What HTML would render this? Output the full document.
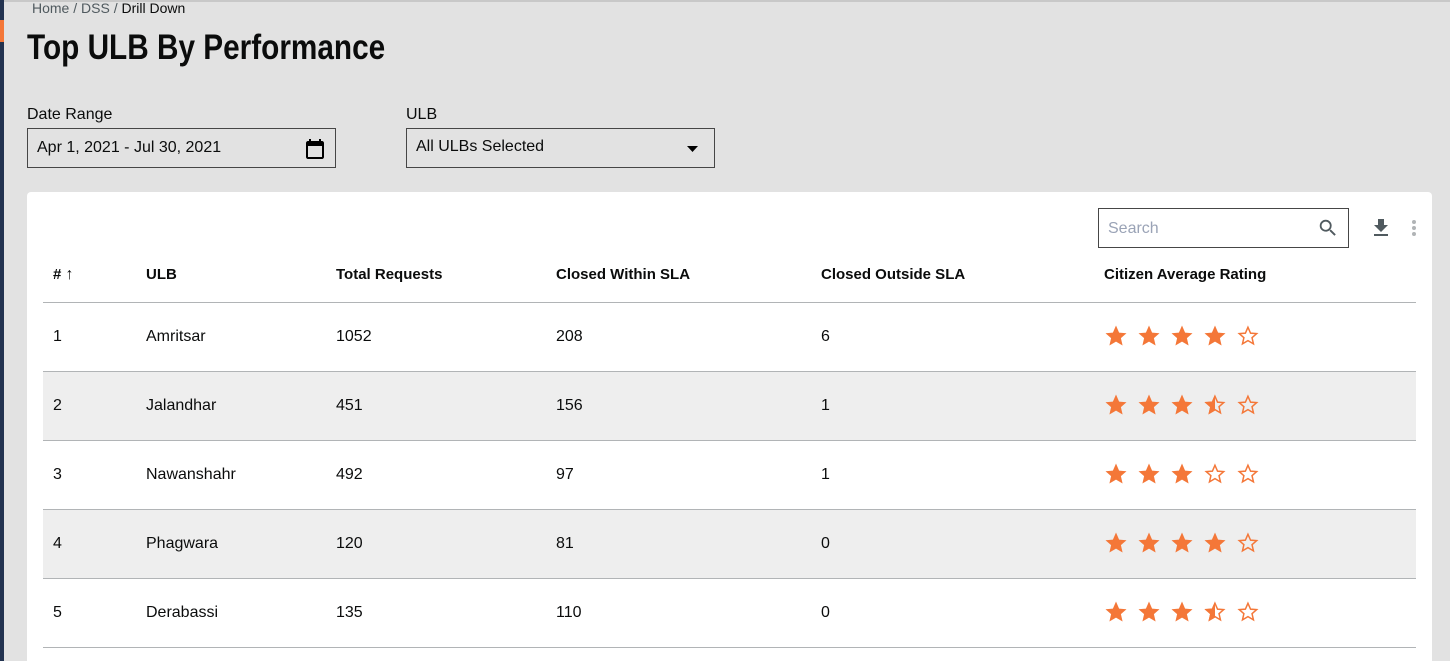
<!DOCTYPE html>
<html><head><meta charset="utf-8"><style>
*{box-sizing:border-box;margin:0;padding:0}
html,body{width:1450px;height:661px;overflow:hidden}
body{background:#e2e2e2;font-family:"Liberation Sans",sans-serif;color:#0b0c0c;position:relative}
.abs{position:absolute}
.side{left:0;top:0;width:4px;height:661px;background:#233350}
.sideo{left:0;top:20px;width:4px;height:22px;background:#f47738}
.topsh{left:0;top:0;width:1450px;height:2px;background:#c8c8c8}
.crumb{left:32px;top:0;font-size:14px;color:#505a5f}
.crumb b{font-weight:normal;color:#0b0c0c}
h1{position:absolute;left:27px;top:28px;font-weight:bold;font-size:35px;transform:scaleX(0.85);transform-origin:0 0;white-space:nowrap}
.lbl{font-size:16px}
.box{border:1px solid #464646;height:40px;font-size:16px;padding:10px 9px}
.card{left:27px;top:192px;width:1405px;height:469px;background:#fff;border-radius:4px 4px 0 0}
.search{left:1098px;top:208px;width:251px;height:40px;border:1px solid #464646;font-size:16px;color:#9aa3b6;padding:11px 9px}
.th{top:266px;font-size:15px;font-weight:bold}
.row{left:43px;width:1373px;height:69px;border-top:1px solid #b1b4b6}
.row span{position:absolute;top:25px;font-size:16px}
.g{background:#eeeeee}
</style></head><body>
<div class="abs topsh"></div>
<div class="abs side"></div><div class="abs sideo"></div>
<div class="abs crumb">Home / DSS / <b>Drill Down</b></div>
<h1>Top ULB By Performance</h1>
<div class="abs lbl" style="left:27px;top:106px">Date Range</div>
<div class="abs box" style="left:27px;top:128px;width:309px">Apr 1, 2021 - Jul 30, 2021</div>
<svg class="abs" style="left:303px;top:137px" width="24" height="24" viewBox="0 0 24 24"><path d="M19 4h-1V2h-2v2H8V2H6v2H5c-1.1 0-2 .9-2 2v14c0 1.1.9 2 2 2h14c1.1 0 2-.9 2-2V6c0-1.1-.9-2-2-2zm0 16H5V9h14v11z" fill="#000"/></svg>
<div class="abs lbl" style="left:406px;top:106px">ULB</div>
<div class="abs box" style="left:406px;top:128px;width:309px;padding-top:9px">All ULBs Selected</div>
<svg class="abs" style="left:687px;top:146px" width="12" height="6"><path d="M0 0h11L5.5 6z" fill="#000"/></svg>
<div class="abs card"></div>
<div class="abs search">Search</div>
<svg class="abs" style="left:1317px;top:217px" width="22" height="22" viewBox="0 0 24 24"><path d="M15.5 14h-.79l-.28-.27A6.47 6.47 0 0 0 16 9.5 6.5 6.5 0 1 0 9.5 16c1.61 0 3.09-.59 4.230-1.57l.27.28v.79l5 4.99L20.49 19l-4.99-5zm-6 0C7.01 14 5 11.99 5 9.5S7.01 5 9.5 5 14 7.01 14 9.5 11.99 14 9.5 14z" fill="#505a5f"/></svg>
<svg class="abs" style="left:1369px;top:216px" width="24" height="24" viewBox="0 0 24 24"><path d="M19 9h-4V3H9v6H5l7 7 7-7zM5 18v2h14v-2H5z" fill="#505a5f"/></svg>
<svg class="abs" style="left:1410px;top:219px" width="8" height="18"><circle cx="4" cy="3" r="2" fill="#b1b4b6"/><circle cx="4" cy="9" r="2" fill="#b1b4b6"/><circle cx="4" cy="15" r="2" fill="#b1b4b6"/></svg>
<div class="abs th" style="left:53px"># <span style="font-size:16px">↑</span></div>
<div class="abs th" style="left:146px">ULB</div>
<div class="abs th" style="left:336px">Total Requests</div>
<div class="abs th" style="left:556px">Closed Within SLA</div>
<div class="abs th" style="left:821px">Closed Outside SLA</div>
<div class="abs th" style="left:1104px">Citizen Average Rating</div>
<svg width="0" height="0" style="position:absolute"><defs>
<path id="s" d="M12 1.5l3.1 7.1 7.4.6-5.6 4.9 1.7 7.4L12 17.6l-6.6 3.9 1.7-7.4L1.5 9.2l7.4-.6z"/>
<clipPath id="h"><rect x="0" y="0" width="12" height="24"/></clipPath>
</defs></svg>
<div class="abs row" style="top:302px"><span style="left:10px">1</span><span style="left:103px">Amritsar</span><span style="left:293px">1052</span><span style="left:513px">208</span><span style="left:778px">6</span></div>
<div class="abs row g" style="top:371px"><span style="left:10px">2</span><span style="left:103px">Jalandhar</span><span style="left:293px">451</span><span style="left:513px">156</span><span style="left:778px">1</span></div>
<div class="abs row" style="top:440px"><span style="left:10px">3</span><span style="left:103px">Nawanshahr</span><span style="left:293px">492</span><span style="left:513px">97</span><span style="left:778px">1</span></div>
<div class="abs row g" style="top:509px"><span style="left:10px">4</span><span style="left:103px">Phagwara</span><span style="left:293px">120</span><span style="left:513px">81</span><span style="left:778px">0</span></div>
<div class="abs row" style="top:578px"><span style="left:10px">5</span><span style="left:103px">Derabassi</span><span style="left:293px">135</span><span style="left:513px">110</span><span style="left:778px">0</span></div>
<div class="abs row" style="top:647px;height:14px"></div>
<svg class="abs" style="left:1103px;top:324px" width="160" height="300" viewBox="0 0 160 300">
<defs>
<g id="F"><use href="#s" fill="#f47738"/></g>
<g id="O"><g transform="translate(2 2) scale(.83)"><use href="#s" fill="none" stroke="#f47738" stroke-width="1.8"/></g></g>
<g id="H"><g transform="translate(2 2) scale(.83)"><use href="#s" fill="none" stroke="#f47738" stroke-width="1.8"/></g><use href="#s" fill="#f47738" clip-path="url(#h)"/></g>
</defs>
<g><use href="#F" x="1"/><use href="#F" x="34"/><use href="#F" x="67"/><use href="#F" x="100"/><use href="#O" x="133"/></g>
<g transform="translate(0 69)"><use href="#F" x="1"/><use href="#F" x="34"/><use href="#F" x="67"/><use href="#H" x="100"/><use href="#O" x="133"/></g>
<g transform="translate(0 138)"><use href="#F" x="1"/><use href="#F" x="34"/><use href="#F" x="67"/><use href="#O" x="100"/><use href="#O" x="133"/></g>
<g transform="translate(0 207)"><use href="#F" x="1"/><use href="#F" x="34"/><use href="#F" x="67"/><use href="#F" x="100"/><use href="#O" x="133"/></g>
<g transform="translate(0 276)"><use href="#F" x="1"/><use href="#F" x="34"/><use href="#F" x="67"/><use href="#H" x="100"/><use href="#O" x="133"/></g>
</svg>
</body></html>
